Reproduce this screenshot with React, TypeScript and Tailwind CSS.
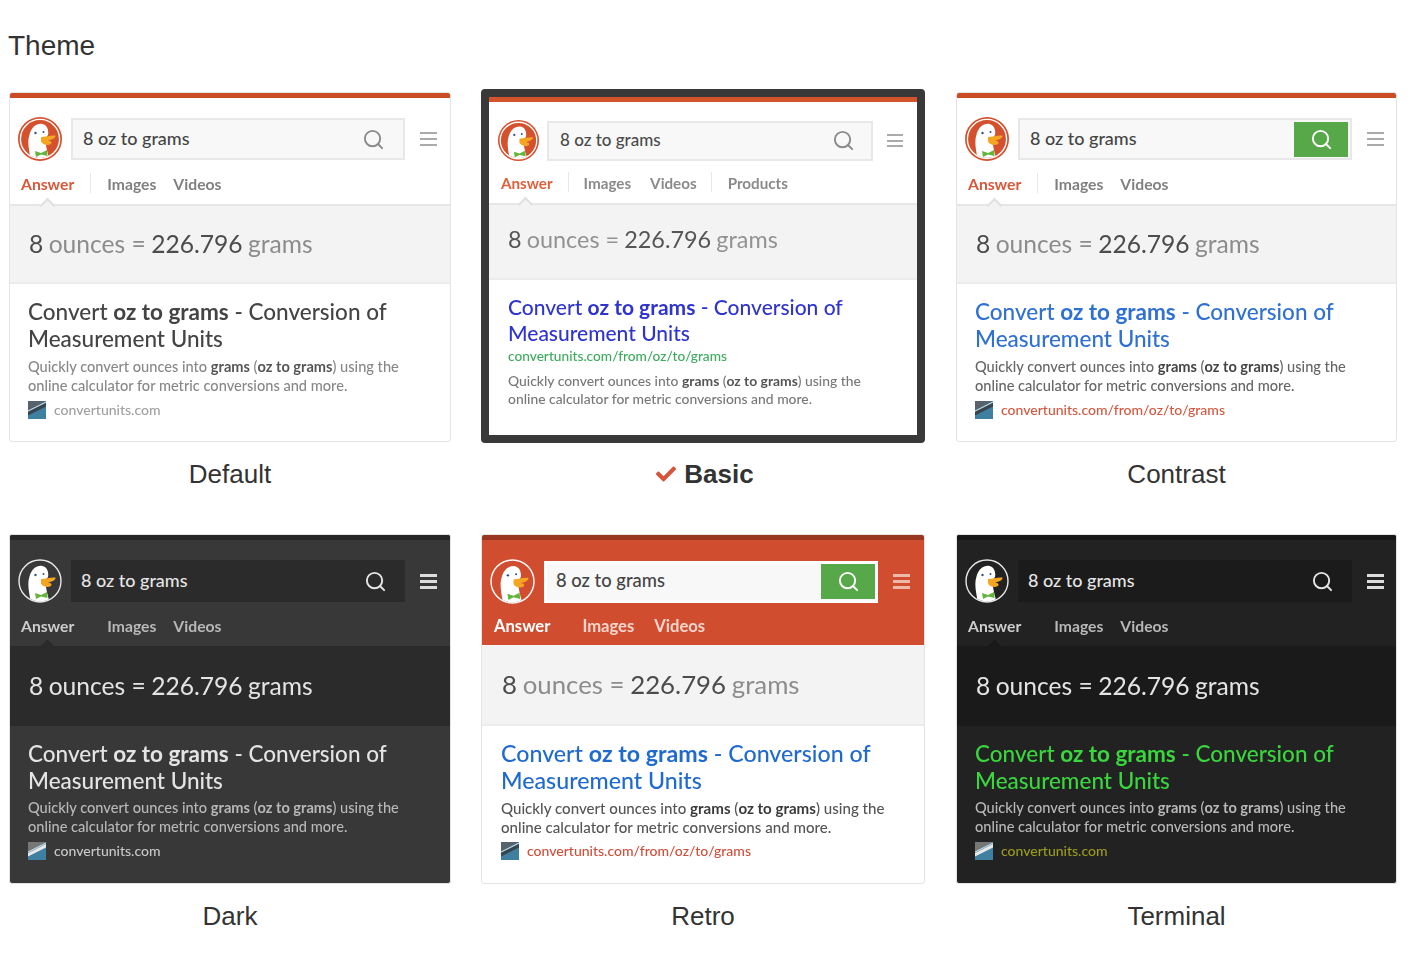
import { useId } from "react";
import { Search } from "lucide-react";
import { FaCheck } from "react-icons/fa";

type Sizes = {
  card: string;
  top: string;
  row: string;
  logo: number;
  logoBox: string;
  search: string;
  query: string;
  menu: string;
  menuBar: string;
  icon: number;
  tabs: string;
  tabText: string;
  firstDivider: string;
  tabImages: string;
  tabVideos: string;
  arrow: string;
  band: string;
  result: string;
  title: string;
  snippet: string;
  source: string;
  sourceText: string;
};

const regular: Sizes = {
  card: "h-[350px] w-full",
  top: "h-[5px]",
  row: "pt-[19px] pl-[8px]",
  logo: 44,
  logoBox: "h-[44px] w-[44px]",
  search: "ml-[9px] h-[42px] w-[334px] pl-[10px] pr-[18px]",
  query: "text-[18px] pb-[2px]",
  menu: "ml-[15px] w-[17px] gap-[4px]",
  menuBar: "h-[2px]",
  icon: 23,
  tabs: "h-[45px] pt-[12px] pl-[11px]",
  tabText: "text-[15.7px] leading-[22px]",
  firstDivider: "ml-[16px]",
  tabImages: "ml-[16px]",
  tabVideos: "ml-[17px]",
  arrow: "left-[32px]",
  band: "h-[78px] pl-[19px] text-[24.6px]",
  result: "pt-[15px] pl-[18px]",
  title: "text-[22.5px] leading-[26.5px]",
  snippet: "mt-[5px] text-[14.6px] leading-[19px]",
  source: "mt-[6px]",
  sourceText: "text-[14px]",
};

const dark: Sizes = {
  ...regular,
  menu: "ml-[15px] w-[17px] gap-[3px]",
  menuBar: "h-[3px]",
  tabs: "h-[43px] pt-[12px] pl-[11px]",
  band: "h-[80px] pl-[19px] text-[24.6px]",
  snippet: "mt-[4px] text-[14.6px] leading-[19px]",
};

const compact: Sizes = {
  card: "h-[354px] w-full",
  top: "h-[5px]",
  row: "pt-[18px] pl-[9px]",
  logo: 41,
  logoBox: "h-[41px] w-[41px]",
  search: "ml-[8px] h-[40px] w-[326px] pl-[11px] pr-[16px]",
  query: "text-[17px] pb-[2px]",
  menu: "ml-[14px] w-[16px] gap-[3.5px]",
  menuBar: "h-[2px]",
  icon: 23,
  tabs: "h-[44px] pt-[11px] pl-[12px]",
  tabText: "text-[15.2px] leading-[22px]",
  firstDivider: "ml-[15px]",
  tabImages: "ml-[15px]",
  tabVideos: "ml-[19px]",
  arrow: "left-[31px]",
  band: "h-[75px] pl-[19px] pb-[4px] text-[23.4px]",
  result: "pt-[14px] pl-[19px]",
  title: "text-[21px] leading-[26px]",
  snippet: "mt-[7px] text-[13.9px] leading-[18px]",
  source: "mt-[0px]",
  sourceText: "text-[13.7px]",
};

const large: Sizes = {
  card: "h-[350px] w-full",
  top: "h-[5px]",
  row: "pt-[19px] pl-[8px]",
  logo: 45,
  logoBox: "h-[45px] w-[45px]",
  search: "ml-[9px] h-[42px] w-[334px] pl-[9px] pr-0",
  query: "text-[18.4px] pb-[2px]",
  menu: "ml-[15px] w-[17px] gap-[3px]",
  menuBar: "h-[3px]",
  icon: 23,
  tabs: "h-[41px] pt-[11px] pl-[12px]",
  tabText: "text-[16.6px] leading-[22px]",
  firstDivider: "ml-[16px]",
  tabImages: "ml-[15px]",
  tabVideos: "ml-[20px]",
  arrow: "hidden",
  band: "h-[81px] pl-[20px] text-[25.8px]",
  result: "pt-[14px] pl-[19px]",
  title: "text-[23.2px] leading-[27px]",
  snippet: "mt-[5px] text-[15.1px] leading-[19px]",
  source: "mt-[5px]",
  sourceText: "text-[14px]",
};

type Look = {
  name: string;
  selected?: boolean;
  sizes: Sizes;
  frame: string;
  topBar: string;
  header: string;
  searchBox: string;
  queryText: string;
  iconColor: string;
  greenButton?: boolean;
  menuColor: string;
  answer: string;
  tab: string;
  divider: string;
  tabBorder: string;
  arrowColor: string;
  bandBg: string;
  strong: string;
  soft: string;
  resultBg: string;
  titleText: string;
  snippetText: string;
  boldText: string;
  sourceText: string;
  url: string;
  showFavicon: boolean;
  urlFirst?: boolean;
  products?: boolean;
  logoFill: string;
  logoRing: string;
  logoOuter: string;
  ringRadius: number;
  faviconStripe: string;
};

const looks: Look[] = [
  {
    name: "Default",
    sizes: regular,
    frame: "mt-[3px] border border-[#e4e4e4]",
    topBar: "bg-[#cb4b25]",
    header: "bg-white",
    searchBox: "bg-[#f8f8f8] border-2 border-[#e8e8e8]",
    queryText: "text-[#444444]",
    iconColor: "text-[#8a8a8a]",
    menuColor: "bg-[#aaaaaa]",
    answer: "text-[#d9583a]",
    tab: "text-[#808080]",
    divider: "bg-[#e8e8e8]",
    tabBorder: "border-b-2 border-[#e6e6e6]",
    arrowColor: "bg-[#f3f3f3] border-[#e0e0e0]",
    bandBg: "bg-[#f3f3f3] border-b-2 border-[#ececec]",
    strong: "text-[#4c4c4c]",
    soft: "text-[#8c8c8c]",
    resultBg: "bg-white",
    titleText: "text-[#444444]",
    snippetText: "text-[#888888]",
    boldText: "text-[#555555]",
    sourceText: "text-[#a0a0a0]",
    url: "convertunits.com",
    showFavicon: true,
    logoFill: "#d5502d",
    logoRing: "#ffffff",
    logoOuter: "#d5502d",
    ringRadius: 19.6,
    faviconStripe: "#39434c",
  },
  {
    name: "Basic",
    selected: true,
    sizes: compact,
    frame: "border-[8px] border-[#393939] rounded-[4px]",
    topBar: "bg-[#d4532a]",
    header: "bg-white",
    searchBox: "bg-[#f8f8f8] border-2 border-[#e8e8e8]",
    queryText: "text-[#4a4a4a]",
    iconColor: "text-[#8a8a8a]",
    menuColor: "bg-[#aaaaaa]",
    answer: "text-[#e0603c]",
    tab: "text-[#8a8a8a]",
    divider: "bg-[#e8e8e8]",
    tabBorder: "border-b-2 border-[#e6e6e6]",
    arrowColor: "bg-[#f3f3f3] border-[#e0e0e0]",
    bandBg: "bg-[#f3f3f3] border-b-2 border-[#ececec]",
    strong: "text-[#555555]",
    soft: "text-[#929292]",
    resultBg: "bg-white",
    titleText: "text-[#2f34cf]",
    snippetText: "text-[#777777]",
    boldText: "text-[#555555]",
    sourceText: "text-[#3cab5c]",
    url: "convertunits.com/from/oz/to/grams",
    showFavicon: false,
    urlFirst: true,
    products: true,
    logoFill: "#d5502d",
    logoRing: "#ffffff",
    logoOuter: "#d5502d",
    ringRadius: 19.6,
    faviconStripe: "#39434c",
  },
  {
    name: "Contrast",
    sizes: { ...regular, search: "ml-[9px] h-[42px] w-[334px] pl-[10px] pr-[2px]" },
    frame: "mt-[3px] border border-[#e4e4e4]",
    topBar: "bg-[#cb4b25]",
    header: "bg-white",
    searchBox: "bg-[#f8f8f8] border-2 border-[#e8e8e8]",
    queryText: "text-[#444444]",
    iconColor: "text-white",
    greenButton: true,
    menuColor: "bg-[#aaaaaa]",
    answer: "text-[#d9583a]",
    tab: "text-[#808080]",
    divider: "bg-[#e8e8e8]",
    tabBorder: "border-b-2 border-[#e6e6e6]",
    arrowColor: "bg-[#f3f3f3] border-[#e0e0e0]",
    bandBg: "bg-[#f3f3f3] border-b-2 border-[#ececec]",
    strong: "text-[#4c4c4c]",
    soft: "text-[#8c8c8c]",
    resultBg: "bg-white",
    titleText: "text-[#2f70d4]",
    snippetText: "text-[#666666]",
    boldText: "text-[#444444]",
    sourceText: "text-[#d4573f]",
    url: "convertunits.com/from/oz/to/grams",
    showFavicon: true,
    logoFill: "#d5502d",
    logoRing: "#ffffff",
    logoOuter: "#d5502d",
    ringRadius: 19.6,
    faviconStripe: "#39434c",
  },
  {
    name: "Dark",
    sizes: dark,
    frame: "border border-[#e4e4e4]",
    topBar: "bg-[#262626]",
    header: "bg-[#383838]",
    searchBox: "bg-[#2b2b2b]",
    queryText: "text-[#e6e6e6]",
    iconColor: "text-[#e6e6e6]",
    menuColor: "bg-[#dddddd]",
    answer: "text-[#cccccc]",
    tab: "text-[#b8b8b8]",
    divider: "bg-[#383838]",
    tabBorder: "",
    arrowColor: "bg-[#2b2b2b] border-[#2b2b2b]",
    bandBg: "bg-[#2b2b2b]",
    strong: "text-[#e4e4e4]",
    soft: "text-[#e4e4e4]",
    resultBg: "bg-[#383838]",
    titleText: "text-[#e4e4e4]",
    snippetText: "text-[#b8b8b8]",
    boldText: "text-[#b8b8b8]",
    sourceText: "text-[#c8c8c8]",
    url: "convertunits.com",
    showFavicon: true,
    logoFill: "#383838",
    logoRing: "#e8e8e8",
    logoOuter: "#383838",
    ringRadius: 21,
    faviconStripe: "#e8e8e8",
  },
  {
    name: "Retro",
    sizes: large,
    frame: "border border-[#e4e4e4]",
    topBar: "bg-[#98361f]",
    header: "bg-[#d14d30]",
    searchBox: "bg-[#f8f8f8] border-[3px] border-white",
    queryText: "text-[#444444]",
    iconColor: "text-white",
    greenButton: true,
    menuColor: "bg-[#f0b8a8]",
    answer: "text-white",
    tab: "text-[#f6d6cc]",
    divider: "bg-[#d14d30]",
    tabBorder: "",
    arrowColor: "",
    bandBg: "bg-[#f3f3f3] border-b-2 border-[#ececec]",
    strong: "text-[#4c4c4c]",
    soft: "text-[#8c8c8c]",
    resultBg: "bg-white",
    titleText: "text-[#1f6ad0]",
    snippetText: "text-[#555555]",
    boldText: "text-[#3a3a3a]",
    sourceText: "text-[#cf4f3a]",
    url: "convertunits.com/from/oz/to/grams",
    showFavicon: true,
    logoFill: "#d14d30",
    logoRing: "#ffffff",
    logoOuter: "#d14d30",
    ringRadius: 21,
    faviconStripe: "#39434c",
  },
  {
    name: "Terminal",
    sizes: dark,
    frame: "border border-[#e4e4e4]",
    topBar: "bg-[#161616]",
    header: "bg-[#222222]",
    searchBox: "bg-[#1b1b1b]",
    queryText: "text-[#e6e6e6]",
    iconColor: "text-[#e6e6e6]",
    menuColor: "bg-[#dddddd]",
    answer: "text-[#cccccc]",
    tab: "text-[#b8b8b8]",
    divider: "bg-[#222222]",
    tabBorder: "",
    arrowColor: "bg-[#1a1a1a] border-[#1a1a1a]",
    bandBg: "bg-[#1a1a1a]",
    strong: "text-[#e4e4e4]",
    soft: "text-[#e4e4e4]",
    resultBg: "bg-[#222222]",
    titleText: "text-[#3ad63e]",
    snippetText: "text-[#b8b8b8]",
    boldText: "text-[#b8b8b8]",
    sourceText: "text-[#9a9c1e]",
    url: "convertunits.com",
    showFavicon: true,
    logoFill: "#222222",
    logoRing: "#e8e8e8",
    logoOuter: "#222222",
    ringRadius: 21,
    faviconStripe: "#e8e8e8",
  },
];

function DuckLogo({ look }: { look: Look }) {
  const clipId = useId();
  const size = look.sizes.logo;
  return (
    <svg width={size} height={size} viewBox="0 0 44 44">
      <defs>
        <clipPath id={clipId}>
          <circle cx="22" cy="22" r={look.ringRadius - 0.6} />
        </clipPath>
      </defs>
      <circle cx="22" cy="22" r="22" fill={look.logoOuter} />
      <circle cx="22" cy="22" r={look.ringRadius} fill={look.logoFill} stroke={look.logoRing} strokeWidth="1.4" />
      <g clipPath={`url(#${clipId})`}>
        <path d="M13 44C11 33 9 25 11.5 17.5C13.5 10 19 6 24.5 7C29 8 31 13 30 18L27 22C28 28 29 35 32 44Z" fill="#ffffff" />
        <path d="M23 20C28 19.5 33 18 37.5 18.5C38 21 34 23 30 23.5C33 24 34.5 25 33 27C29 29 24.5 27.5 23 24.5Z" fill="#f4a623" />
        <path d="M17 34L23 36L29 33L29.5 39L23 37.5L18 40Z" fill="#63b53c" />
        <circle cx="17.5" cy="16" r="1.2" fill="#2d4f8e" />
        <circle cx="25.5" cy="15" r="1" fill="#2d4f8e" />
      </g>
    </svg>
  );
}

function Favicon({ stripe }: { stripe: string }) {
  return (
    <svg width="18" height="18" viewBox="0 0 18 18" className="shrink-0">
      <rect width="18" height="18" fill="#3f7f9f" />
      <path d="M0 0H18L0 10Z" fill={stripe === "#e8e8e8" ? "#777777" : "#56636d"} />
      <path d="M0 11L18 2V5.5L0 14.5Z" fill={stripe} />
      <path d="M0 10L18 1" stroke="#ffffff" strokeWidth="0.8" />
    </svg>
  );
}

function ThemeCard({ look }: { look: Look }) {
  const s = look.sizes;
  return (
    <div className={`${s.card} ${look.frame} ${look.resultBg} overflow-hidden rounded-[3px] font-['Lato',sans-serif]`}>
      <div className="blur-[0.5px]">
        <div className={`${s.top} ${look.topBar}`} />
        <div className={look.header}>
          <div className={`flex items-center ${s.row}`}>
            <div className={s.logoBox}>
              <DuckLogo look={look} />
            </div>
            <div className={`${s.search} ${look.searchBox} flex items-center justify-between`}>
              <span className={`${s.query} ${look.queryText} font-medium`}>8 oz to grams</span>
              {look.greenButton ? (
                <span className="flex h-[35px] w-[54px] items-center justify-center bg-[#57a848]">
                  <Search size={s.icon} className={look.iconColor} />
                </span>
              ) : (
                <Search size={s.icon} className={look.iconColor} />
              )}
            </div>
            <div className={`${s.menu} flex flex-col`}>
              <span className={`${s.menuBar} ${look.menuColor}`} />
              <span className={`${s.menuBar} ${look.menuColor}`} />
              <span className={`${s.menuBar} ${look.menuColor}`} />
            </div>
          </div>
          <div className={`relative flex items-start font-bold ${s.tabs} ${s.tabText} ${look.tabBorder}`}>
            <span className={look.answer}>Answer</span>
            <span className={`${s.firstDivider} h-[20px] w-px ${look.divider}`} />
            <span className={`${s.tabImages} ${look.tab}`}>Images</span>
            <span className={`${s.tabVideos} ${look.tab}`}>Videos</span>
            {look.products && (
              <>
                <span className="ml-[14px] h-[20px] w-px bg-[#e8e8e8]" />
                <span className={`ml-[16px] ${look.tab}`}>Products</span>
              </>
            )}
            <span className={`absolute bottom-[-7px] h-[11px] w-[11px] rotate-45 border-l-2 border-t-2 ${s.arrow} ${look.arrowColor}`} />
          </div>
        </div>
        <div className={`${s.band} ${look.bandBg} flex items-center`}>
          <span className={look.strong}>8</span>
          <span className={`ml-[0.22em] ${look.soft}`}>ounces =</span>
          <span className={`ml-[0.22em] ${look.strong}`}>226.796</span>
          <span className={`ml-[0.22em] ${look.soft}`}>grams</span>
        </div>
        <div className={s.result}>
          <div className={`${s.title} ${look.titleText} font-medium`}>
            Convert <b className="font-bold">oz to grams</b> - Conversion of
            <br />
            Measurement Units
          </div>
          {look.urlFirst && <div className={`mt-[1px] ${s.sourceText} font-medium leading-[18px] text-[#3cab5c]`}>{look.url}</div>}
          <div className={`${s.snippet} ${look.snippetText} font-medium`}>
            Quickly convert ounces into <b className={`font-bold ${look.boldText}`}>grams</b> (
            <b className={`font-bold ${look.boldText}`}>oz to grams</b>) using the
            <br />
            online calculator for metric conversions and more.
          </div>
          {look.showFavicon && (
            <div className={`${s.source} flex items-center gap-[8px]`}>
              <Favicon stripe={look.faviconStripe} />
              <span className={`${s.sourceText} font-medium leading-[18px] ${look.sourceText}`}>{look.url}</span>
            </div>
          )}
        </div>
      </div>
    </div>
  );
}

export default function App() {
  return (
    <div className="min-h-[964px] bg-white pl-[9px] pt-[28px] font-['Liberation_Sans',Arial,sans-serif] text-[#333333]">
      <h1 className="-ml-px mb-[25px] text-[28px] font-normal leading-[36px]">Theme</h1>
      <div className="grid grid-cols-[442px_444px_442px] gap-x-[30px] gap-y-[44px] [&>*:nth-child(3n)]:ml-px">
        {looks.map((look) => (
          <div key={look.name}>
            <ThemeCard look={look} />
            <div
              className={`flex h-[32px] items-center justify-center gap-2 text-[26px] leading-[32px] ${
                look.selected ? "mt-[15px] pl-[4px] font-bold" : "mt-[16px]"
              }`}
            >
              {look.selected && <FaCheck size={20} className="text-[#d9533a]" />}
              {look.name}
            </div>
          </div>
        ))}
      </div>
    </div>
  );
}
